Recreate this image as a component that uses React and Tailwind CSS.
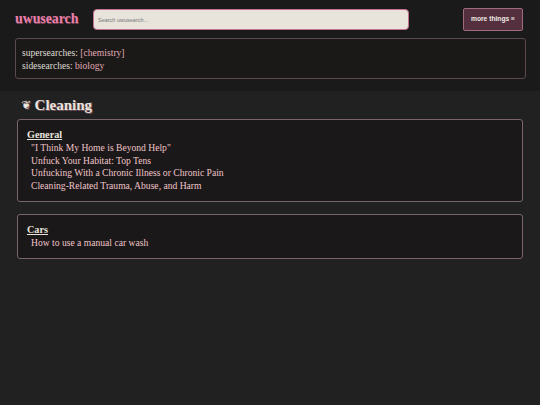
const serif = "font-['Liberation_Serif','DejaVu_Serif',serif]"

function Section({ title, links, className = "" }) {
  return (
    <section className={`rounded-[3px] border border-[#7a656d] bg-[#1a1818] pl-[9px] pr-2 pt-[8px] pb-[8px] ${className}`}>
      <h2 className="text-[10.2px] leading-[14px] font-bold text-[#e8e4dc] underline">{title}</h2>
      <ul className="pl-1">
        {links.map((l) => (
          <li key={l} className="text-[9.6px] leading-[12.7px] text-[#f0c4ca]">{l}</li>
        ))}
      </ul>
    </section>
  )
}

export default function App() {
  return (
    <div className={`${serif} h-[405px] w-[540px] overflow-hidden bg-[#212121]`}>
      <header className="h-[91px] bg-[#1a1a1a] pl-[15px] pr-[15px] pt-[8px]">
        <div className="flex h-[23px] items-center">
          <div className="w-[78px] text-[13.8px] font-bold text-[#e77fa8] [text-shadow:0.5px_0.5px_0_#7a4258]">uwusearch</div>
          <input
            placeholder="Search uwusearch..."
            className="h-[21px] w-[316px] rounded-[4px] border border-[#c76f93] bg-[#e8e4dc] px-[4px] font-['Liberation_Sans',sans-serif] text-[5.5px] text-[#333] placeholder:text-[#777]"
          />
          <button className="ml-auto mr-[2px] h-[23px] w-[60px] rounded-[2px] border border-[#a06a80] bg-[#54303f] font-['Liberation_Sans',sans-serif] text-[6.7px] font-bold text-[#eeeae4]">
            more things ≡
          </button>
        </div>
        <div className="mt-[7px] h-[41px] w-[511px] rounded-[3px] border border-[#5c4a50] bg-[#1b1918] px-[6px] pt-[8px] text-[9.6px] leading-[12.8px] text-[#dedad2]">
          <div>supersearches: <span className="text-[#e0a8b4]">[chemistry]</span></div>
          <div>sidesearches: <span className="text-[#e0a8b4]">biology</span></div>
        </div>
      </header>
      <main className="px-[17px]">
        <h1 className="ml-[4px] flex h-[28px] items-center text-[15px] font-bold text-[#e8e4dc] [text-shadow:1px_1px_0_#75505c]">
          <span className="mr-[3.5px] font-['DejaVu_Sans',sans-serif] text-[12px] font-normal">❦</span>
          Cleaning
        </h1>
        <Section
          title="General"
          links={[
            '"I Think My Home is Beyond Help"',
            "Unfuck Your Habitat: Top Tens",
            "Unfucking With a Chronic Illness or Chronic Pain",
            "Cleaning-Related Trauma, Abuse, and Harm",
          ]}
        />
        <Section className="mt-[12px]" title="Cars" links={["How to use a manual car wash"]} />
      </main>
    </div>
  )
}
